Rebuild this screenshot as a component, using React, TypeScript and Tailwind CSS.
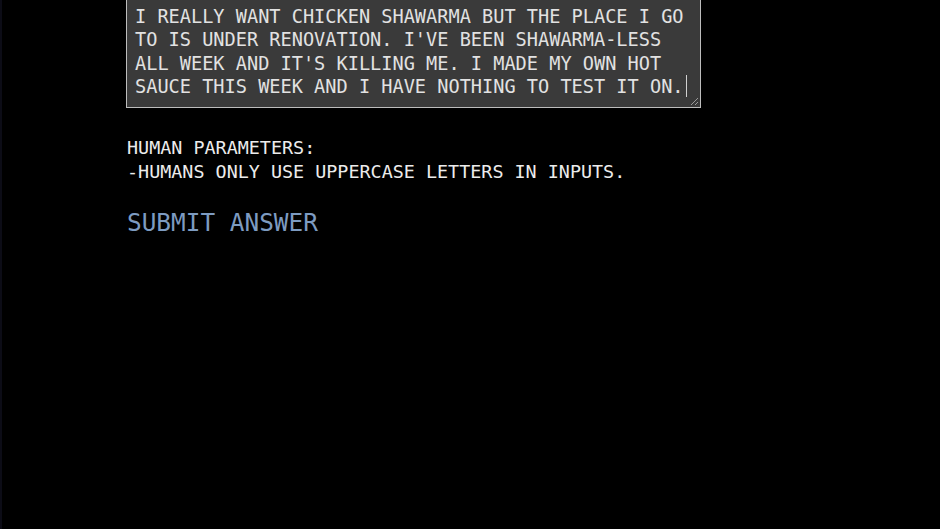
const lines = [
  "I REALLY WANT CHICKEN SHAWARMA BUT THE PLACE I GO",
  "TO IS UNDER RENOVATION. I'VE BEEN SHAWARMA-LESS",
  "ALL WEEK AND IT'S KILLING ME. I MADE MY OWN HOT",
  "SAUCE THIS WEEK AND I HAVE NOTHING TO TEST IT ON.",
];

const mono = "font-['DejaVu_Sans_Mono',monospace]";

export default function App() {
  return (
    <div className={`min-h-[529px] w-full overflow-hidden bg-black border-l-2 border-[#0c0c16] ${mono}`}>
      <div className="pl-[124px]">
        {/* answer box, scrolled so its top edge is off screen */}
        <div className="relative -mt-[5px] w-[575px] border border-[#bdbdbd] bg-[#3a3a3a] pl-[8px] pt-[9px] pb-[9px] text-[18.6px] leading-[23.3px] text-[#e2e2e2]">
          {lines.map((l, i) => (
            <div key={i} className="whitespace-pre">
              {l}
              {i === lines.length - 1 && (
                <span className="ml-[2px] inline-block h-[22px] w-px bg-[#d0d0d0] align-top" />
              )}
            </div>
          ))}
          <svg className="absolute bottom-[1px] right-[1px]" width="10" height="10" viewBox="0 0 10 10">
            <path d="M9 2 L2 9 M9 6 L6 9" stroke="#9a9a9a" strokeWidth="1" />
          </svg>
        </div>

        <div className="mt-[28px] pl-[1px] text-[18.4px] leading-[24px] text-[#ececec]">
          <div>HUMAN PARAMETERS:</div>
          <div>-HUMANS ONLY USE UPPERCASE LETTERS IN INPUTS.</div>
        </div>

        <div className="mt-[24px] pl-[1px] text-[24.4px] leading-[30px] text-[#7d9bc1]">SUBMIT ANSWER</div>
      </div>
    </div>
  );
}
